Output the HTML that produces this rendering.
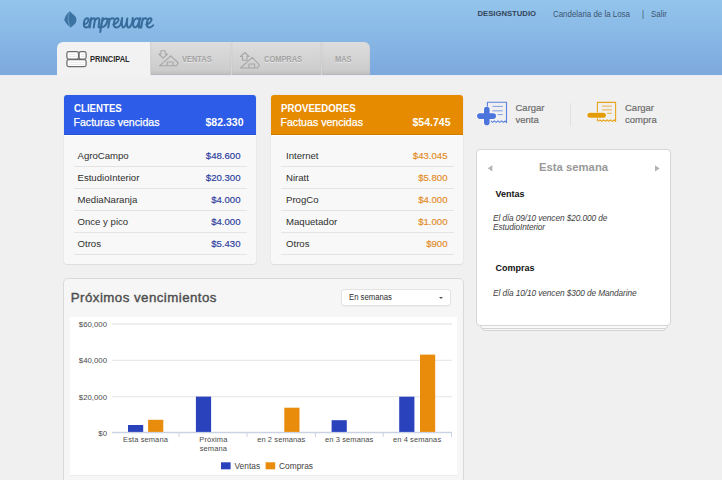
<!DOCTYPE html>
<html><head><meta charset="utf-8">
<style>
*{margin:0;padding:0;box-sizing:border-box}
html,body{width:722px;height:480px;overflow:hidden}
body{background:#f0f0f0;font-family:"Liberation Sans",sans-serif;position:relative;color:#333}
.abs{position:absolute}
#hdr{left:0;top:0;width:722px;height:76px;background:linear-gradient(#93c5ec,#7da9de);border-bottom:1px solid #e9ecf4}
.tr{top:8.1px;font-size:8.6px;color:#3d5570;white-space:nowrap;line-height:12px;transform:scaleX(.92);transform-origin:0 0}
/* tabs */
#tabs{left:57px;top:42px;height:33px}
.tab{position:absolute;top:0;height:33px;background:linear-gradient(#dddddd,#cacaca);color:#a2a2a2;font-weight:bold;font-size:8.2px;line-height:34px;text-shadow:0 1px 0 rgba(255,255,255,.5);box-shadow:inset 0 -1px 0 #b8b8b8,inset 0 -3px 3px rgba(0,0,0,.05)}
.tab span{transform:scaleX(.91);transform-origin:0 50%;top:1px}
.tab.act{background:#f2f2f2;color:#2a2a2a;border-radius:6px 0 0 0;box-shadow:none;text-shadow:none;height:35px}
/* boxes */
.box{position:absolute;background:#f8f8f8;border-radius:3px;box-shadow:0 0 0 1px rgba(0,0,0,.025),0 1px 1px rgba(0,0,0,.05)}
.bh{position:absolute;left:0;top:0;right:0;height:40px;border-radius:3px 3px 0 0;color:#fff;box-shadow:inset 0 -1px 0 rgba(0,0,0,.1),0 1px 0 #fff}
.bh .t{position:absolute;left:9.5px;top:7.5px;font-weight:bold;font-size:10.4px;line-height:12px;transform:scaleX(.93);transform-origin:0 0}
.bh .s{position:absolute;left:9.5px;top:21px;font-size:10.6px;line-height:13px;-webkit-text-stroke:0.25px #fff}
.bh .a{position:absolute;right:12.5px;top:21px;font-size:10.5px;font-weight:bold;line-height:13px}
.row{position:absolute;left:9.5px;width:173px;height:22px;border-bottom:1px solid #e4e4e4;font-size:9.6px;line-height:22px;color:#2e2e2e}
.row .n{position:absolute;left:4px;top:0}
.row .v{position:absolute;right:6px;top:0;-webkit-text-stroke:0.15px currentColor}
</style></head><body>
<div id="hdr" class="abs"></div>
<!-- logo -->
<svg class="abs" style="left:0;top:0" width="170" height="40" viewBox="0 0 170 40">
  <path d="M69.9,11.2 C71.5,12.8 73,14.2 74.5,15.6 C76.6,17.5 77.1,20.6 75.6,23 C74.3,25 72,26 70.8,27.7 C68.5,26 66,23.5 65,21.3 L64.2,20.6 C64.6,16.5 67,13.5 69.9,11.2 Z" fill="#3b73a3"/>
  <path d="M69.6,12.8 C67.6,16 67.6,22 70.2,26.8" fill="none" stroke="#6d9fc8" stroke-width="0.9"/>
  <g transform="translate(84.2,17.5) skewX(-6)" fill="none" stroke="#376c9b" stroke-width="2.05" stroke-linecap="round" stroke-linejoin="round">
    <path d="M0.5,7 C2.5,6.5 5,4.5 4.5,2 C4,0 1,0 0.4,4 C-0.2,8 1,10.2 3.5,10 C4.5,9.9 5.2,9.3 5.8,8.5 C6.3,6 6.8,2 7,0.6 L6.6,10 M6.9,3.5 C7.6,0.8 10.6,-0.4 11,2 L10.6,10 M11,3.5 C11.6,0.8 15,-0.4 15.4,2 C15.7,4 15,8 15.5,9.5 C16,10.3 17,10 17.6,9 C18,6 18.4,3 18.5,0.6 L17.6,14.5 M18.5,3.5 C20,0 24,0 23.5,4 C23,8 20,10 18.6,9.2"/>
    <path d="M23.8,1.6 C24.6,0.9 25.6,1.5 25.5,3 L25.1,10 M25.3,3.5 C26,0.8 28,0.2 29.5,1.2"/>
    <path d="M29.8,7 C31.8,6.5 35,4.5 34.5,2 C34,0 31,0 30.4,4 C29.8,8 31,10.2 33.5,10 C35,9.8 36,9 37,7.5 C37.5,4.5 37.8,1.5 38,0.6 C38,4 38,9 40,10 C42,10 43,5 43.2,1 C43,5 43.5,10 45.5,10 C48,10 49,4 48.6,0.6"/>
    <path d="M55,2 C53,-0.5 50,1 49.6,5 C49.2,9 51,10.5 53,9.5 C54.5,8.5 55.5,4 56,0.6 C55.6,4 55.2,9 56,10 C56.5,10.2 57.2,9.5 57.8,8.8 C58.2,6 58.5,3 58.6,1 L58.1,10 M58.4,3.5 C59,0.8 61,0.2 62.5,1.2"/>
    <path d="M62.8,7 C64.8,6.5 68,4.5 67.5,2 C67,0 64,0 63.4,4 C62.8,8 64,10.2 66.5,10 C68,9.8 69,9 69.8,7.8"/>
  </g>
</svg>
<div class="abs tr" style="left:477.5px;top:7.9px;font-weight:bold;font-size:7.7px;color:#33445a;transform:none">DESIGNSTUDIO</div>
<div class="abs tr" style="left:553px">Candelaria de la Losa</div>
<div class="abs tr" style="left:641.5px">|</div>
<div class="abs tr" style="left:651px">Salir</div>

<!-- tabs -->
<div class="abs tab act" style="left:57px;top:42px;width:93px"><span style="position:absolute;left:33px">PRINCIPAL</span></div>
<div class="abs tab" style="left:150px;top:42px;width:81px;border-left:1px solid #d4d4d4"><span style="position:absolute;left:31px">VENTAS</span></div>
<div class="abs tab" style="left:231px;top:42px;width:90px;border-left:1px solid #d4d4d4"><span style="position:absolute;left:32px">COMPRAS</span></div>
<div class="abs tab" style="left:321px;top:42px;width:49px;border-left:1px solid #d4d4d4;border-radius:0 6px 0 0"><span style="position:absolute;left:13px">MAS</span></div>

<svg class="abs" style="left:0;top:40px" width="300" height="35" viewBox="0 40 300 35">
  <g fill="#fff" stroke="#6c6c6c" stroke-width="1.25">
    <rect x="66.9" y="51.6" width="11.6" height="7.4" rx="1.8"/>
    <rect x="79.1" y="51.6" width="7" height="7.4" rx="1.8"/>
    <rect x="66.9" y="59.6" width="19.2" height="7" rx="1.8"/>
  </g>
  <g fill="none" stroke="#e2e2e2" stroke-width="0.7">
    <path d="M69 54.5 H76.5 M69 56.5 H76.5 M81 54.5 H84.5 M81 56.5 H84.5 M69 62.5 H84 M69 64.5 H84"/>
  </g>
  <g fill="none" stroke="#a6a6a6" stroke-width="1.05" stroke-linejoin="round">
    <path d="M161 50.8 H165.2 V54 H167.5 L163.1 58.2 L158.8 54 H161 Z"/>
    <path d="M159.5 65.8 L170.8 55.8 L178.3 63 L176.5 65.8 Z M167.2 65.8 V62 H173 V65.8"/>
    <path d="M244.8 52.5 L249 56.5 H247 V60.2 H242.5 V56.5 H240.5 Z"/>
    <path d="M240.5 68 L252.2 57.3 L259.5 65 L257.6 68 Z M249 68 V64 H254.6 V68"/>
  </g>
</svg>
<!-- clientes -->
<div class="box" style="left:64px;top:95px;width:192px;height:169px">
  <div class="bh" style="background:#2d5ce8"><div class="t">CLIENTES</div><div class="s">Facturas vencidas</div><div class="a">$82.330</div></div>
  <div class="row" style="top:50px"><span class="n">AgroCampo</span><span class="v" style="color:#2a3a9e">$48.600</span></div>
  <div class="row" style="top:72px"><span class="n">EstudioInterior</span><span class="v" style="color:#2a3a9e">$20.300</span></div>
  <div class="row" style="top:94px"><span class="n">MediaNaranja</span><span class="v" style="color:#2a3a9e">$4.000</span></div>
  <div class="row" style="top:116px"><span class="n">Once y pico</span><span class="v" style="color:#2a3a9e">$4.000</span></div>
  <div class="row" style="top:138px"><span class="n">Otros</span><span class="v" style="color:#2a3a9e">$5.430</span></div>
</div>

<!-- proveedores -->
<div class="box" style="left:271px;top:95px;width:192px;height:169px">
  <div class="bh" style="background:#e68a00"><div class="t">PROVEEDORES</div><div class="s">Factuas vencidas</div><div class="a">$54.745</div></div>
  <div class="row" style="top:50px"><span class="n" style="left:5.5px">Internet</span><span class="v" style="color:#e38a1e">$43.045</span></div>
  <div class="row" style="top:72px"><span class="n" style="left:5.5px">Niratt</span><span class="v" style="color:#e38a1e">$5.800</span></div>
  <div class="row" style="top:94px"><span class="n" style="left:5.5px">ProgCo</span><span class="v" style="color:#e38a1e">$4.000</span></div>
  <div class="row" style="top:116px"><span class="n" style="left:5.5px">Maquetador</span><span class="v" style="color:#e38a1e">$1.000</span></div>
  <div class="row" style="top:138px"><span class="n" style="left:5.5px">Otros</span><span class="v" style="color:#e38a1e">$900</span></div>
</div>


<!-- cargar venta -->
<svg class="abs" style="left:475px;top:99px" width="36" height="30" viewBox="0 0 36 30">
  <path d="M12.4 8 V3.3 H31.5 V23.6 L30.2 22 L28.4 23.4 L26.6 21.9 L24.8 23.4 L23 21.9 L21.2 23.4 L19.4 21.9 L17.6 23.4 L15.8 21.9" fill="none" stroke="#5b7fe0" stroke-width="1.1" stroke-linejoin="round"/>
  <path d="M17.4 7.4 H27.8 M17.4 11.8 H27.8 M22.8 15.6 H27.8" stroke="#7f9ce6" stroke-width="1"/>
  <path d="M11.8 10.6 V23.4 M4.9 17.1 H18.2" stroke="#fff" stroke-opacity=".5" stroke-width="7.4" stroke-linecap="round"/>
  <path d="M11.8 10.6 V23.4 M4.9 17.1 H18.2" stroke="#4c74dd" stroke-width="5.6" stroke-linecap="round"/>
</svg>
<div class="abs" style="left:515.5px;top:102px;font-size:9.5px;line-height:12px;color:#6e6e6e;-webkit-text-stroke:0.2px #6e6e6e">Cargar<br>venta</div>
<div class="abs" style="left:570px;top:103px;width:1px;height:23px;background:#e0e0e0"></div>
<!-- cargar compra -->
<svg class="abs" style="left:585px;top:99px" width="36" height="30" viewBox="0 0 36 30">
  <path d="M12.4 22.2 V3.4 H30.6 V22.4 L29.3 20.9 L27.5 22.4 L25.7 20.9 L23.9 22.4 L22.1 20.9 L20.3 22.4 L18.5 20.9 L16.7 22.4 L14.9 20.9 L13.4 22.3" fill="none" stroke="#e8a41a" stroke-width="1.1" stroke-linejoin="round"/>
  <path d="M17.1 7.1 H26.8 M17.1 10.9 H26.8 M22.1 14.3 H26.8" stroke="#ebb040" stroke-width="1"/>
  <path d="M4.9 16.2 H18.4" stroke="#fff" stroke-opacity=".5" stroke-width="6.6" stroke-linecap="round"/>
  <path d="M4.9 16.2 H18.4" stroke="#e39c06" stroke-width="5" stroke-linecap="round"/>
</svg>
<div class="abs" style="left:625px;top:102px;font-size:9.5px;line-height:12px;color:#6e6e6e;-webkit-text-stroke:0.2px #6e6e6e">Cargar<br>compra</div>

<!-- esta semana -->
<div class="abs" style="left:482px;top:324px;width:184px;height:7px;background:#f8f8f8;border:1px solid #d4d4d4;border-radius:0 0 3px 3px"></div>
<div class="abs" style="left:480px;top:322px;width:188px;height:7px;background:#fafafa;border:1px solid #d4d4d4;border-radius:0 0 3px 3px"></div>
<div class="abs" style="left:476px;top:148.5px;width:195px;height:177.5px;background:#fff;border:1.3px solid #d6d6d6;border-radius:4px"></div>
<svg class="abs" style="left:480px;top:160px" width="190" height="16" viewBox="480 160 190 16"><polygon points="487.8,168.3 492.3,165.2 492.3,171.4" fill="#b3b3b3"/><polygon points="655,165.2 659.7,168.4 655,171.6" fill="#b3b3b3"/></svg>
<div class="abs" style="left:539px;top:160px;font-size:11.3px;font-weight:bold;color:#999;line-height:14px">Esta semana</div>
<div class="abs" style="left:495.5px;top:188.5px;font-size:9px;font-weight:bold;color:#111;line-height:11px">Ventas</div>
<div class="abs" style="left:493px;top:214.2px;font-size:8.3px;font-style:italic;color:#3e3e3e;line-height:8.8px;letter-spacing:-0.1px">El día 09/10 vencen $20.000 de<br>EstudioInterior</div>
<div class="abs" style="left:495.5px;top:262.5px;font-size:9px;font-weight:bold;color:#111;line-height:11px">Compras</div>
<div class="abs" style="left:493px;top:289.2px;font-size:8.3px;font-style:italic;color:#3e3e3e;line-height:8.8px;letter-spacing:-0.1px">El día 10/10 vencen $300 de Mandarine</div>

<!-- proximos vencimientos -->
<div class="abs" style="left:63px;top:277.5px;width:400.5px;height:220px;background:#f6f6f6;border:1.3px solid #d9d9d9;border-radius:5px"></div>
<div class="abs" style="left:70.8px;top:289px;font-size:13.3px;letter-spacing:0.45px;color:#4e4e4e;line-height:17px;-webkit-text-stroke:0.4px #4e4e4e">Próximos vencimientos</div>
<div class="abs" style="left:341px;top:289.2px;width:110px;height:16.5px;background:#fff;border:1px solid #e3e3e3;border-radius:3px;box-shadow:0 1px 1px rgba(0,0,0,.04)"></div>
<div class="abs" style="left:349px;top:292.3px;font-size:8.9px;color:#2e2e2e;line-height:11px;transform:scaleX(.87);transform-origin:0 0">En semanas</div>
<div class="abs" style="left:439px;top:297px;width:0;height:0;border-left:2.5px solid transparent;border-right:2.5px solid transparent;border-top:2.5px solid #555"></div>
<div class="abs" style="left:70px;top:316.5px;width:387px;height:158.5px;background:#fff;box-shadow:0 1px 0 #ececec"></div>
<svg class="abs" style="left:0;top:0" width="722" height="480">
  <g stroke="#e9e9e9" stroke-width="1.3">
    <line x1="112" y1="324" x2="452" y2="324"/>
    <line x1="112" y1="360.3" x2="452" y2="360.3"/>
    <line x1="112" y1="396.6" x2="452" y2="396.6"/>
  </g>
  <line x1="112" y1="432.5" x2="452" y2="432.5" stroke="#c9d3e4" stroke-width="1.3"/>
  <g stroke="#c9d3e4" stroke-width="1">
    <line x1="179" y1="433" x2="179" y2="437"/>
    <line x1="247" y1="433" x2="247" y2="437"/>
    <line x1="315.4" y1="433" x2="315.4" y2="437"/>
    <line x1="383.2" y1="433" x2="383.2" y2="437"/>
    <line x1="451.5" y1="433" x2="451.5" y2="437"/>
  </g>
  <g fill="#2b42bd">
    <rect x="128" y="425" width="15.2" height="6.9"/>
    <rect x="195.9" y="396.6" width="15.2" height="35.3"/>
    <rect x="331.6" y="420.2" width="15.2" height="11.7"/>
    <rect x="399.2" y="396.7" width="15.2" height="35.2"/>
    <rect x="221" y="462.3" width="9.6" height="7"/>
  </g>
  <g fill="#e98b0b">
    <rect x="148.1" y="419.8" width="15.2" height="12.1"/>
    <rect x="284.3" y="407.7" width="15.2" height="24.2"/>
    <rect x="420" y="354.6" width="15.2" height="77.3"/>
    <rect x="265.6" y="462.3" width="9.6" height="7"/>
  </g>
  <g font-family="Liberation Sans" font-size="7.8" fill="#4a4a4a" text-anchor="end">
    <text x="107" y="327">$60,000</text>
    <text x="107" y="363.3">$40,000</text>
    <text x="107" y="399.6">$20,000</text>
    <text x="107" y="435.8">$0</text>
  </g>
  <g font-family="Liberation Sans" font-size="7.5" fill="#4a4a4a" text-anchor="middle" letter-spacing="0.1">
    <text x="145.5" y="442">Esta semana</text>
    <text x="213.4" y="442">Próxima</text>
    <text x="213.4" y="450.8">semana</text>
    <text x="281.3" y="442">en 2 semanas</text>
    <text x="349.2" y="442">en 3 semanas</text>
    <text x="417.1" y="442">en 4 semanas</text>
  </g>
  <g font-family="Liberation Sans" font-size="8.4" fill="#444">
    <text x="234.5" y="469">Ventas</text>
    <text x="279" y="469">Compras</text>
  </g>
</svg>
</body></html>
